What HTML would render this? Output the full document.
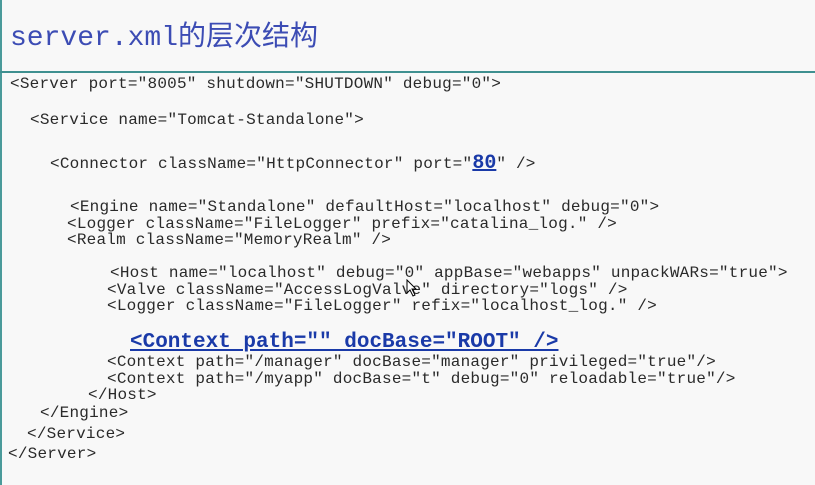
<!DOCTYPE html>
<html><head><meta charset="utf-8"><style>
html,body{margin:0;padding:0}
body{width:815px;height:485px;background:#f8f8f8;position:relative;overflow:hidden;font-family:"Liberation Mono",monospace;color:#2a2a2a}
.vl{position:absolute;left:0;top:0;width:2px;height:485px;background:#4a9a9a}
.hl{position:absolute;left:0;top:71px;width:815px;height:2px;background:#3f9090}
.t{position:absolute;left:10px;top:14px;font-size:28px;color:#3c4cb4;font-family:"Liberation Mono","Noto Sans CJK SC",monospace;white-space:pre}
.l{position:absolute;font-size:16px;line-height:18px;white-space:pre;letter-spacing:0.22px}
.b{color:#1a3aa8;font-weight:bold;text-decoration:underline;letter-spacing:0}
</style></head><body>
<div class="vl"></div><div class="hl"></div>
<div class="t">server.xml的层次结构</div>
<div class="l" style="left:10px;top:75px">&lt;Server port="8005" shutdown="SHUTDOWN" debug="0"&gt;</div>
<div class="l" style="left:30px;top:111px">&lt;Service name="Tomcat-Standalone"&gt;</div>
<div class="l" style="left:50px;top:155px">&lt;Connector className="HttpConnector" port="<span class="b" style="font-size:20px">80</span>" /&gt;</div>
<div class="l" style="left:70px;top:198px">&lt;Engine name="Standalone" defaultHost="localhost" debug="0"&gt;</div>
<div class="l" style="left:67px;top:215px">&lt;Logger className="FileLogger" prefix="catalina_log." /&gt;</div>
<div class="l" style="left:67px;top:231px">&lt;Realm className="MemoryRealm" /&gt;</div>
<div class="l" style="left:110px;top:264px">&lt;Host name="localhost" debug="0" appBase="webapps" unpackWARs="true"&gt;</div>
<div class="l" style="left:107px;top:281px">&lt;Valve className="AccessLogValve" directory="logs" /&gt;</div>
<div class="l" style="left:107px;top:297px">&lt;Logger className="FileLogger" refix="localhost_log." /&gt;</div>
<div class="l b" style="left:130px;top:331px;font-size:21px;line-height:24px">&lt;Context path="" docBase="ROOT" /&gt;</div>
<div class="l" style="left:107px;top:353px">&lt;Context path="/manager" docBase="manager" privileged="true"/&gt;</div>
<div class="l" style="left:107px;top:370px">&lt;Context path="/myapp" docBase="t" debug="0" reloadable="true"/&gt;</div>
<div class="l" style="left:88px;top:386px">&lt;/Host&gt;</div>
<div class="l" style="left:40px;top:404px">&lt;/Engine&gt;</div>
<div class="l" style="left:27px;top:425px">&lt;/Service&gt;</div>
<div class="l" style="left:8px;top:445px">&lt;/Server&gt;</div>
<svg style="position:absolute;left:406px;top:279px" width="12" height="18" viewBox="0 0 12 18"><path d="M1 1 L1 14 L4 11 L7 17 L9 16 L6 10 L10 10 Z" fill="#fff" stroke="#000" stroke-width="1"/></svg>
</body></html>
